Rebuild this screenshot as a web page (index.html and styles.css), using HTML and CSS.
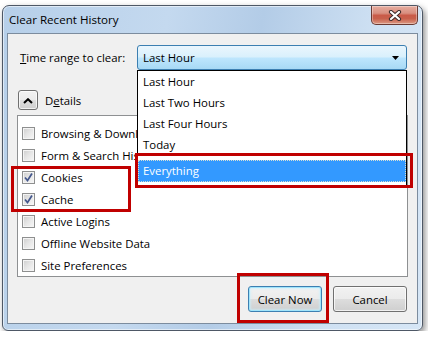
FILE: index.html
```html
<!DOCTYPE html>
<html lang="en">
<head>
    <meta charset="UTF-8">
    <meta name="viewport" content="width=device-width, initial-scale=1.0">
    <link rel="stylesheet" href="styles.css">
</head>
<body>
    <div class="window">
        <div class="titlebar">
            <span class="title">Clear Recent History</span>
            <span class="close-btn">
                <svg width="14" height="11" viewBox="0 0 14 11">
                    <path d="M3 2 L11 9 M11 2 L3 9" stroke="#3a2a2a" stroke-width="4.2" stroke-linecap="round"/>
                    <path d="M3 2 L11 9 M11 2 L3 9" stroke="#ffffff" stroke-width="2.2" stroke-linecap="round"/>
                </svg>
            </span>
        </div>

        <div class="client">
            <div class="range-row">
                <span class="range-label"><u>T</u>ime range to clear:</span>
                <div class="select">
                    <span>Last Hour</span>
                    <svg class="arrow" width="7" height="4" viewBox="0 0 7 4"><path d="M0 0 H7 L3.5 4 Z" fill="#000"/></svg>
                </div>
            </div>

            <div class="details-row">
                <span class="toggle">
                    <svg width="10" height="6" viewBox="0 0 10 6"><path d="M1 5 L5 1.2 L9 5" fill="none" stroke="#000" stroke-width="2"/></svg>
                </span>
                <span>D<u>e</u>tails</span>
            </div>

            <ul class="items">
                <li><span class="check"></span>Browsing &amp; Download History</li>
                <li><span class="check"></span>Form &amp; Search History</li>
                <li><span class="check checked"><svg width="11" height="11" viewBox="0 0 11 11"><path d="M2 5.5 L4.5 8.5 L9 1.5" fill="none" stroke="#44578c" stroke-width="1.7"/></svg></span>Cookies</li>
                <li><span class="check checked"><svg width="11" height="11" viewBox="0 0 11 11"><path d="M2 5.5 L4.5 8.5 L9 1.5" fill="none" stroke="#44578c" stroke-width="1.7"/></svg></span>Cache</li>
                <li><span class="check"></span>Active Logins</li>
                <li><span class="check"></span>Offline Website Data</li>
                <li><span class="check"></span>Site Preferences</li>
            </ul>

            <div class="actions">
                <button class="btn btn-default">Clear Now</button>
                <button class="btn">Cancel</button>
            </div>

            <!-- open combobox list -->
            <ul class="dropdown">
                <li>Last Hour</li>
                <li>Last Two Hours</li>
                <li>Last Four Hours</li>
                <li>Today</li>
                <li class="selected">Everything</li>
            </ul>

            <!-- annotation boxes -->
            <div class="mark mark-range"></div>
            <div class="mark mark-cookies"></div>
            <div class="mark mark-clear"></div>
        </div>
    </div>
</body>
</html>
```

FILE: styles.css
```css
body {
    margin: 0;
    background-color: #fff;
    font-family: "Open Sans", "Noto Sans", sans-serif;
    font-size: 11.4px;
    color: #000;
}

.window {
    margin: 5px 0 0 2px;
    width: 421px;
    height: 326px;
    box-sizing: border-box;
    border: 1px solid #4e5866;
    border-radius: 7px 7px 6px 6px;
    padding: 0 4px 6px 4px;
    background: linear-gradient(100deg, #b6cfe9 0%, #c4d9ef 35%, #b3cce7 55%, #cfe1f3 80%, #d6e6f6 100%);
    box-shadow: 2px 3px 6px rgba(0, 0, 0, 0.45), inset 0 0 0 1px rgba(255, 255, 255, 0.55);
    display: flex;
    flex-direction: column;
}

.titlebar {
    height: 27px;
    display: flex;
    align-items: flex-start;
}

.title {
    padding: 6px 0 0 2px;
    line-height: 16px;
    font-size: 11.6px;
}

.close-btn {
    margin-left: auto;
    width: 47px;
    height: 19px;
    box-sizing: border-box;
    border: 1px solid #6a3a33;
    border-top: none;
    border-radius: 0 0 5px 5px;
    background: linear-gradient(#e6ada0 0%, #d88f80 40%, #c95a48 52%, #c8604c 70%, #dc9a84 100%);
    box-shadow: inset 0 0 0 1px rgba(255, 255, 255, 0.35);
    display: flex;
    align-items: center;
    justify-content: center;
}

.client {
    position: relative;
    flex: 1;
    border: 1px solid #7c8c9e;
    background-color: #f0f0f0;
    display: flex;
    flex-direction: column;
}

.range-row {
    margin: 11px 10px 0 12px;
    display: flex;
    align-items: center;
}

.select {
    margin-left: auto;
    width: 270px;
    height: 25px;
    box-sizing: border-box;
    border: 1px solid #3c7fb1;
    border-radius: 3px;
    padding: 0 4px 0 5px;
    background: linear-gradient(#eaf6fd 0%, #d9f0fc 48%, #bee6fd 52%, #a7d9f5 100%);
    display: flex;
    align-items: center;
}

.select .arrow {
    margin-left: auto;
    margin-right: 3px;
}

.details-row {
    margin: 20px 0 0 10px;
    height: 20px;
    display: flex;
    align-items: center;
    gap: 7px;
}

.toggle {
    width: 20px;
    height: 20px;
    box-sizing: border-box;
    border: 1px solid #707070;
    border-radius: 3px;
    background: linear-gradient(#f2f2f2 0%, #ebebeb 50%, #dddddd 50%, #cfcfcf 100%);
    box-shadow: inset 0 0 0 1px rgba(255, 255, 255, 0.7);
    display: flex;
    align-items: center;
    justify-content: center;
    padding-top: 2px;
}

.items {
    list-style: none;
    margin: 5px 9px 0 9px;
    height: 162px;
    box-sizing: border-box;
    padding: 6px 4px;
    border: 1px solid #8e9092;
    background-color: #fff;
    overflow: hidden;
}

.items li {
    height: 22px;
    display: flex;
    align-items: center;
    white-space: nowrap;
}

.check {
    width: 13px;
    height: 13px;
    box-sizing: border-box;
    margin-right: 6px;
    border: 1px solid #8e8f8f;
    background: linear-gradient(135deg, #cdcdcd 0%, #e6e6e6 50%, #f7f7f7 100%);
    box-shadow: inset 0 0 0 1px #f4f4f4;
    display: flex;
    align-items: center;
    justify-content: center;
}

.actions {
    margin: 9px 10px 0 0;
    display: flex;
    justify-content: flex-end;
    gap: 11px;
}

.btn {
    width: 74px;
    height: 26px;
    border: 1px solid #707070;
    border-radius: 3px;
    font-family: inherit;
    font-size: 11.4px;
    color: #000;
    padding: 0;
    background: linear-gradient(#f2f2f2 0%, #ebebeb 50%, #dddddd 50%, #cfcfcf 100%);
    box-shadow: inset 0 0 0 1px rgba(255, 255, 255, 0.7);
}

.btn-default {
    border-color: #3c7fb1;
    box-shadow: inset 0 0 0 1px #9fe4fb, inset 0 0 2px 2px rgba(200, 240, 255, 0.6);
}

.dropdown {
    position: absolute;
    left: 129px;
    top: 36px;
    width: 270px;
    margin: 0;
    padding: 0 0 4px 0;
    box-sizing: border-box;
    list-style: none;
    border: 1px solid #000;
    background-color: #fff;
}

.dropdown li {
    height: 21px;
    line-height: 21px;
    padding-left: 5px;
}

.dropdown li.selected {
    margin-top: 5px;
    height: 22px;
    line-height: 22px;
    background-color: #3399ff;
    color: #fff;
    outline: 1px dotted rgba(255, 240, 200, 0.8);
    outline-offset: -1px;
}

.mark {
    position: absolute;
    box-sizing: border-box;
    border: 3px solid #c00000;
}

.mark-range {
    left: 127px;
    top: 119px;
    width: 278px;
    height: 35px;
}

.mark-cookies {
    left: 3px;
    top: 132px;
    width: 120px;
    height: 46px;
}

.mark-clear {
    left: 229px;
    top: 239px;
    width: 92px;
    height: 50px;
}
```
